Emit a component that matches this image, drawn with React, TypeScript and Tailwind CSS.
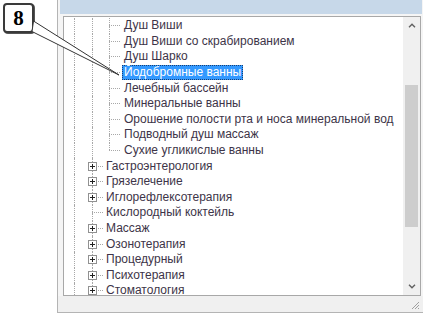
import React from "react";

type Kind = "child" | "childLast" | "plus" | "leaf";
type Item = { label: string; kind: Kind; selected?: boolean };

const items: Item[] = [
  { label: "Душ Виши", kind: "child" },
  { label: "Душ Виши со скрабированием", kind: "child" },
  { label: "Душ Шарко", kind: "child" },
  { label: "Йодобромные ванны", kind: "child", selected: true },
  { label: "Лечебный бассейн", kind: "child" },
  { label: "Минеральные ванны", kind: "child" },
  { label: "Орошение полости рта и носа минеральной вод", kind: "child" },
  { label: "Подводный душ массаж", kind: "child" },
  { label: "Сухие угликислые ванны", kind: "childLast" },
  { label: "Гастроэнтерология", kind: "plus" },
  { label: "Грязелечение", kind: "plus" },
  { label: "Иглорефлексотерапия", kind: "plus" },
  { label: "Кислородный коктейль", kind: "leaf" },
  { label: "Массаж", kind: "plus" },
  { label: "Озонотерапия", kind: "plus" },
  { label: "Процедурный", kind: "plus" },
  { label: "Психотерапия", kind: "plus" },
  { label: "Стоматология", kind: "plus" },
];

function VLine({ w }: { w: string }) {
  return <span className={`${w} shrink-0 self-stretch border-l border-dotted border-[#a8a8a8]`} />;
}

function PlusBox() {
  return (
    <span className="flex h-[9px] w-[9px] shrink-0 items-center justify-center border border-[#919191] bg-white">
      <svg width="7" height="7" viewBox="0 0 7 7">
        <path d="M1 3.5h5M3.5 1v5" stroke="#222" strokeWidth="1" shapeRendering="crispEdges" />
      </svg>
    </span>
  );
}

function Row({ item }: { item: Item }) {
  const isChild = item.kind === "child" || item.kind === "childLast";
  return (
    <div className="flex h-[15.6px] items-center whitespace-nowrap">
      <span className="w-[10px] shrink-0" />
      {isChild ? (
        <>
          <VLine w="w-[18px]" />
          <VLine w="w-[17px]" />
          <span className="flex w-[13px] shrink-0 flex-col self-stretch">
            <span className="flex-1 border-l border-dotted border-[#a8a8a8]" />
            <span className="h-0 w-[11px] border-t border-dotted border-[#a8a8a8]" />
            <span
              className={`flex-1 border-l border-dotted ${
                item.kind === "childLast" ? "border-transparent" : "border-[#a8a8a8]"
              }`}
            />
          </span>
        </>
      ) : (
        <>
          <VLine w="w-[14px]" />
          <span className="flex w-[16px] shrink-0 flex-col self-stretch">
            <span className="ml-[4px] flex-1 border-l border-dotted border-[#a8a8a8]" />
            {item.kind === "plus" ? (
              <span className="flex items-center">
                <PlusBox />
                <span className="ml-px h-0 w-[5px] border-t border-dotted border-[#a8a8a8]" />
              </span>
            ) : (
              <span className="ml-[4px] h-0 w-[11px] border-t border-dotted border-[#a8a8a8]" />
            )}
            <span className="ml-[4px] flex-1 border-l border-dotted border-[#a8a8a8]" />
          </span>
        </>
      )}
      {item.selected ? (
        <span className="h-[15px] border border-dotted border-[#1b3f70] bg-[#3399ff] px-px leading-[13px] text-white">
          {item.label}
        </span>
      ) : (
        <span className="px-[2px] leading-[15px] text-[#3d3448]">{item.label}</span>
      )}
    </div>
  );
}

function Chevron({ up }: { up?: boolean }) {
  return (
    <svg width="8" height="5" viewBox="0 0 8 5">
      <path
        d={up ? "M1 4.2L4 1.2L7 4.2" : "M1 0.8L4 3.8L7 0.8"}
        fill="none"
        stroke="#606060"
        strokeWidth="1.4"
      />
    </svg>
  );
}

export default function App() {
  return (
    <div
      className="relative flex h-[314px] w-[423px] overflow-hidden bg-white text-[12px]"
      style={{ fontFamily: '"Liberation Sans", Arial, sans-serif' }}
    >
      {/* window */}
      <div className="ml-[57px] flex h-[313px] w-[366px] flex-col border-b border-l border-[#b4b4b4] bg-[#f5f5f5]">
        <div className="ml-[2px] mr-[1px] h-[14px] shrink-0 bg-[#c7d8e9]" />
        <div className="ml-[5px] mr-[2px] mt-[2px] flex h-[280px] shrink-0 border border-[#a8a8a8] bg-white">
          <div className="flex-1 overflow-hidden pt-[1px]">
            {items.map((it) => (
              <Row key={it.label} item={it} />
            ))}
          </div>
          <div className="flex w-[17px] shrink-0 flex-col bg-[#f0f0f0]">
            <div className="flex h-[17px] items-center justify-center">
              <Chevron up />
            </div>
            <div className="mx-[2px] mt-[51px] h-[142px] bg-[#cdcdcd]" />
            <div className="flex-1" />
            <div className="flex h-[17px] items-center justify-center">
              <Chevron />
            </div>
          </div>
        </div>
        <div className="flex flex-1 items-end justify-end bg-[#f0f0f0] pb-[2px] pr-[3px]">
          <svg width="10" height="10" viewBox="0 0 10 10">
            <path d="M9 2L2 9M9 5L5 9M9 8L8 9" stroke="#a0a0a0" strokeWidth="1" />
          </svg>
        </div>
      </div>

      {/* callout */}
      <div className="absolute left-[3px] top-[3px] flex h-[30px] w-[31px] items-center justify-center rounded-[4px] border-2 border-[#3a3a3a] bg-white shadow-[1px_1px_0_#555]">
        <span
          className="text-[21px] font-bold leading-none text-black"
          style={{ fontFamily: '"Liberation Serif", "Times New Roman", serif' }}
        >
          8
        </span>
      </div>
      <svg className="pointer-events-none absolute left-0 top-0" width="423" height="314">
        <polygon points="33.5,21 119,75 32,31.5" fill="white" stroke="#333" strokeWidth="1" />
      </svg>
    </div>
  );
}
